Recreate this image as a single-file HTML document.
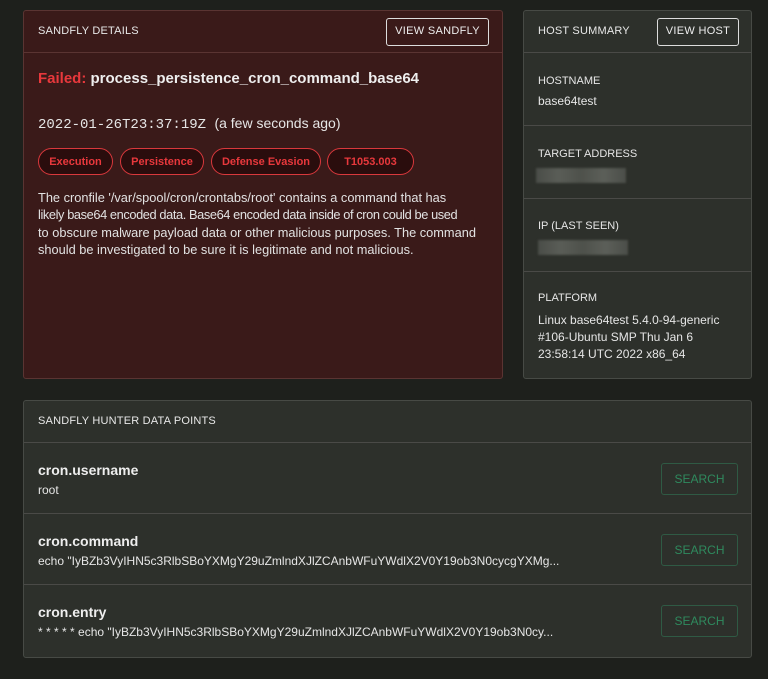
<!DOCTYPE html>
<html><head><meta charset="utf-8"><style>
*{box-sizing:border-box;margin:0;padding:0}
body{width:768px;height:679px;background:#1e201c;font-family:"Liberation Sans",sans-serif;color:#e6e6e6;position:relative;overflow:hidden}
.p{position:absolute;border:1px solid #474a45;border-radius:3px}
.red{left:23px;top:10px;width:480px;height:369px;background:#3a1a19;border-color:#5a3432}
.grn{background:#2d302b}
.hd{height:42px;border-bottom:1px solid #4a4a47;font-size:11px;letter-spacing:.2px;padding-left:14px;line-height:41px;position:relative;color:#e8e8e8}
.red .hd{border-color:#5a3432}
.btn{position:absolute;top:7px;height:28px;border:1.5px solid #ddd;border-radius:3px;font-size:11px;line-height:25px;text-align:center;color:#eee;letter-spacing:.3px}
.t{position:absolute;left:14px;top:59px;font-size:15px;font-weight:bold;color:#eee}
.t span{color:#e8383c}
.d{position:absolute;left:14px;top:104px;font-family:"Liberation Mono",monospace;font-size:14px;color:#e6e6e6}
.d span{font-family:"Liberation Sans",sans-serif}
.pill{position:absolute;top:137px;height:27px;border:1.5px solid #d9383c;border-radius:14px;background:#2a0d0d;color:#e8383c;font-size:11px;font-weight:bold;display:flex;align-items:center;justify-content:center}
.desc{position:absolute;left:14px;top:178px;white-space:nowrap;font-size:12.8px;line-height:17.3px;color:#e2e2e2}
.row{border-bottom:1px solid #4a4a47;padding-left:14px;position:relative}
.lab{font-size:11px;color:#e6e6e6}
.val{font-size:12px;color:#e6e6e6}
.blur{height:15px;background:linear-gradient(90deg,#4a4d48,#5a5d57,#4e514b,#5c5f59,#4b4e49);filter:blur(1px)}
.dp{height:71px;border-bottom:1px solid #4a4a47;position:relative;padding-left:14px}
.dp b{position:absolute;top:19px;left:14px;font-size:14px;color:#eee}
.dp i{position:absolute;top:40px;left:14px;font-style:normal;font-size:12px;color:#e6e6e6;white-space:nowrap}
.s{position:absolute;right:13px;top:20px;width:77px;height:32px;border:1px solid #2f5a44;border-radius:3px;color:#2f8a5e;font-size:12px;line-height:30px;text-align:center}
</style></head><body>
<div class="p red">
 <div class="hd">SANDFLY DETAILS<div class="btn" style="left:362px;width:103px">VIEW SANDFLY</div></div>
 <div class="t"><span>Failed:</span> process_persistence_cron_command_base64</div>
 <div class="d">2022-01-26T23:37:19Z <span>(a few seconds ago)</span></div>
 <div class="pill" style="left:14px;width:75px">Execution</div>
 <div class="pill" style="left:96px;width:84px">Persistence</div>
 <div class="pill" style="left:187px;width:110px">Defense Evasion</div>
 <div class="pill" style="left:303px;width:87px">T1053.003</div>
 <div class="desc">The cronfile '/var/spool/cron/crontabs/root' contains a command that has<br><span style="letter-spacing:-0.4px">likely base64 encoded data. Base64 encoded data inside of cron could be used</span><br>to obscure malware payload data or other malicious purposes. The command<br>should be investigated to be sure it is legitimate and not malicious.</div>
</div>
<div class="p grn" style="left:523px;top:10px;width:229px;height:369px">
 <div class="hd">HOST SUMMARY<div class="btn" style="left:133px;width:82px">VIEW HOST</div></div>
 <div class="row" style="height:73px;padding-top:22px"><div class="lab">HOSTNAME</div><div class="val" style="margin-top:7px">base64test</div></div>
 <div class="row" style="height:73px;padding-top:22px"><div class="lab">TARGET ADDRESS</div><div class="blur" style="margin-top:8px;margin-left:-2px;width:90px"></div></div>
 <div class="row" style="height:73px;padding-top:21px"><div class="lab">IP (LAST SEEN)</div><div class="blur" style="margin-top:8px;width:90px"></div></div>
 <div style="padding:20px 0 0 14px"><div class="lab">PLATFORM</div><div class="val" style="margin-top:8px;line-height:17px;width:200px">Linux base64test 5.4.0-94-generic #106-Ubuntu SMP Thu Jan 6 23:58:14 UTC 2022 x86_64</div></div>
</div>
<div class="p grn" style="left:23px;top:400px;width:729px;height:258px">
 <div class="hd">SANDFLY HUNTER DATA POINTS</div>
 <div class="dp"><b>cron.username</b><i>root</i><div class="s">SEARCH</div></div>
 <div class="dp"><b>cron.command</b><i>echo "IyBZb3VyIHN5c3RlbSBoYXMgY29uZmlndXJlZCAnbWFuYWdlX2V0Y19ob3N0cycgYXMg...</i><div class="s">SEARCH</div></div>
 <div class="dp" style="border:0"><b>cron.entry</b><i>* * * * * echo "IyBZb3VyIHN5c3RlbSBoYXMgY29uZmlndXJlZCAnbWFuYWdlX2V0Y19ob3N0cy...</i><div class="s">SEARCH</div></div>
</div>
</body></html>
